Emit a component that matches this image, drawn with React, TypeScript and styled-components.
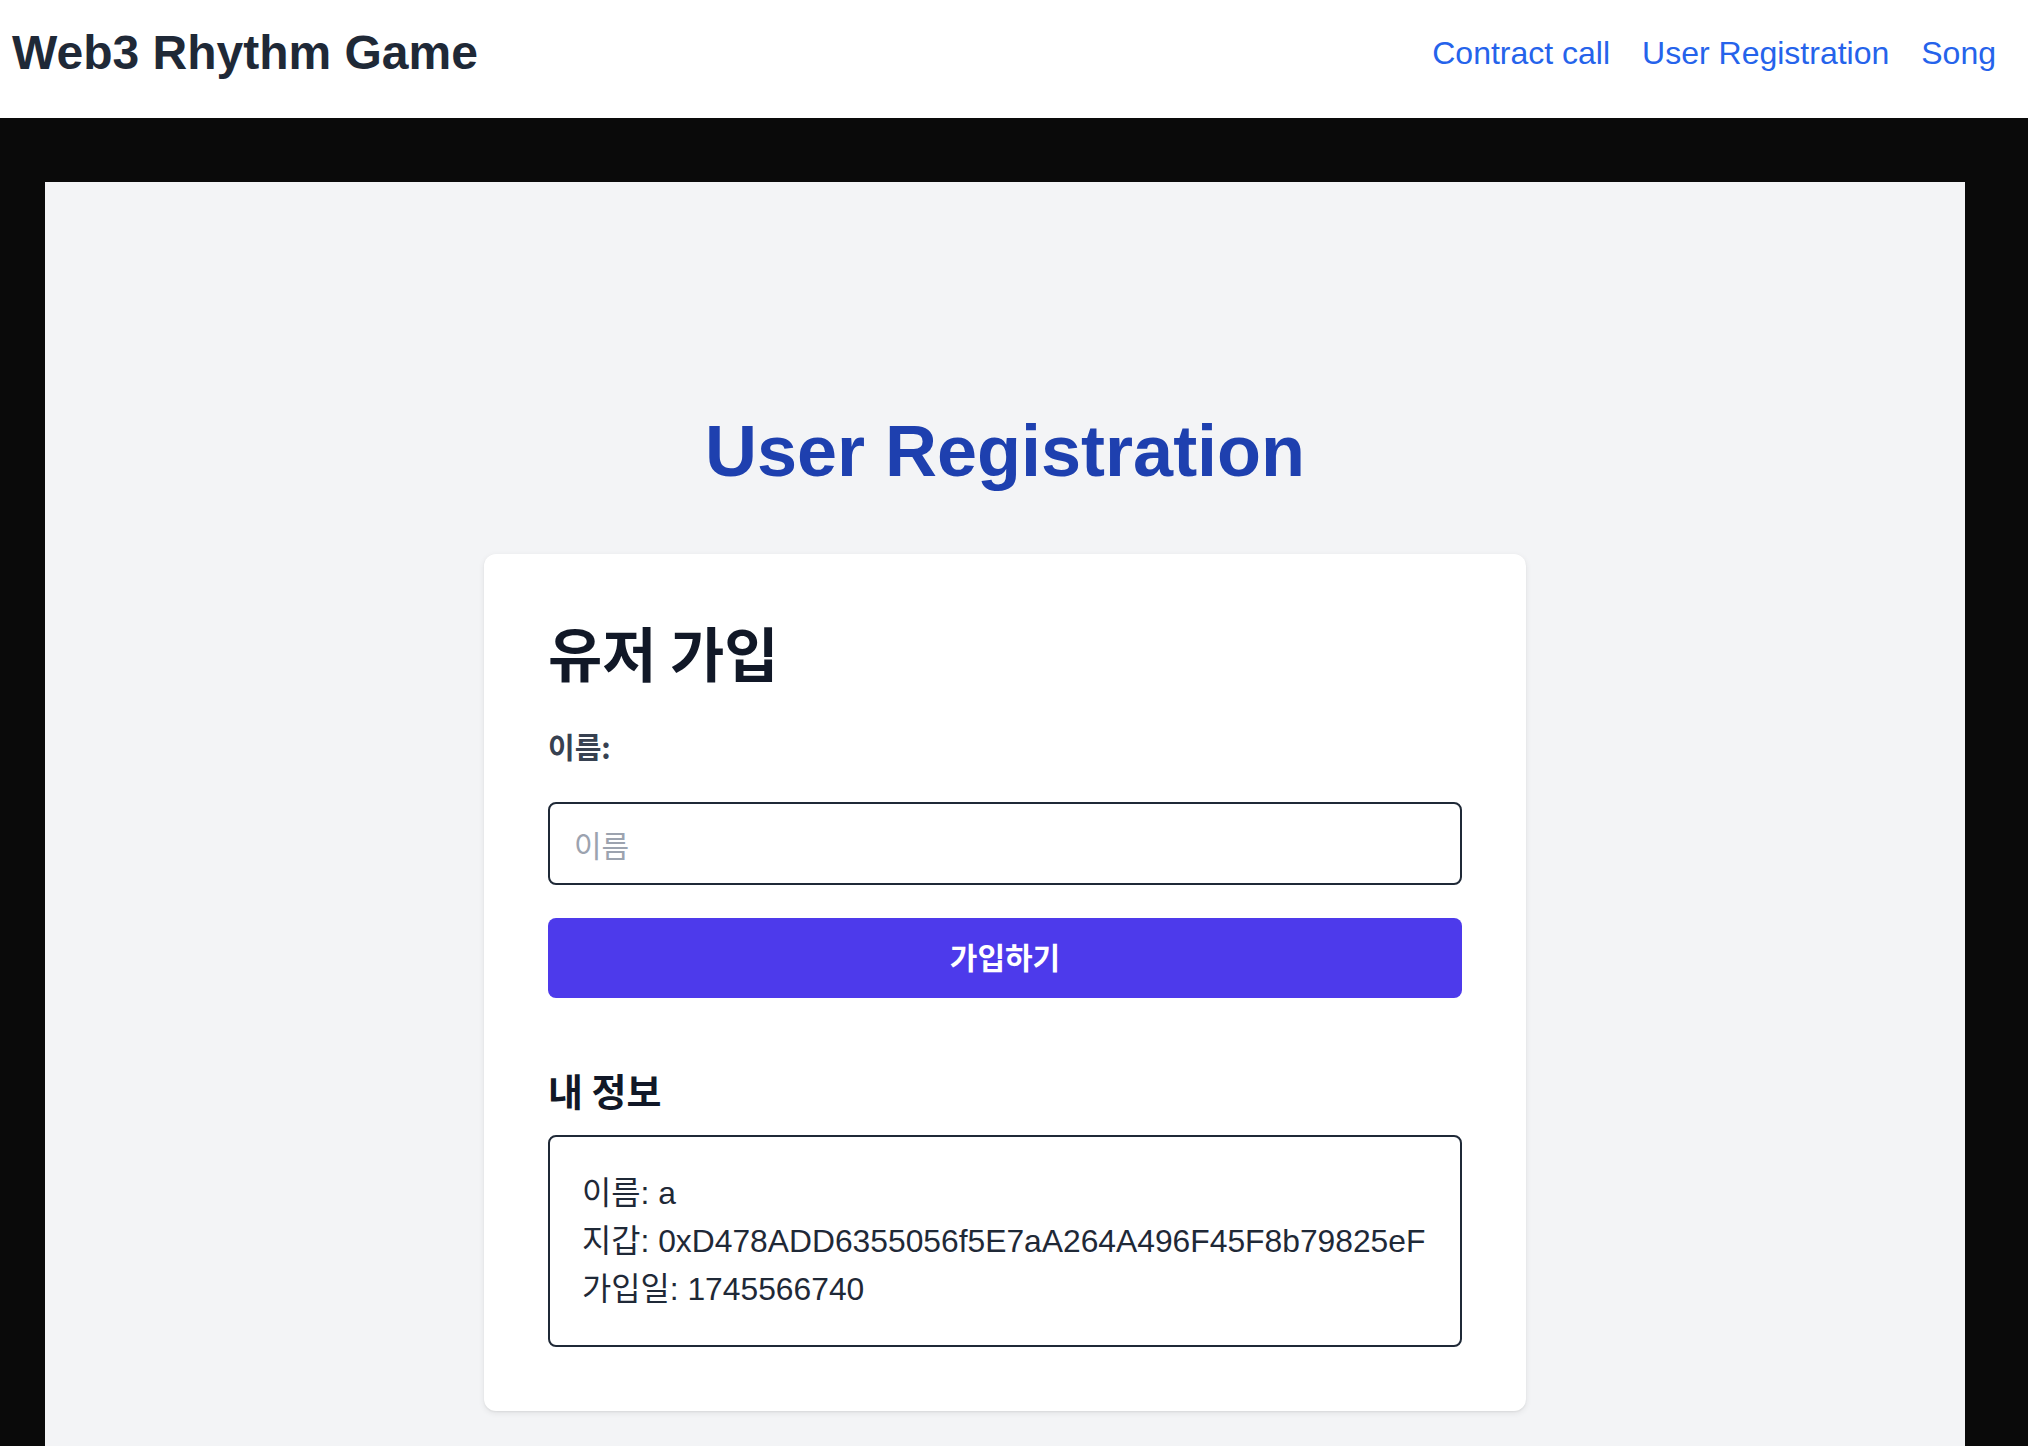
import React from "react";
import styled, { createGlobalStyle } from "styled-components";

const GlobalStyle = createGlobalStyle`
  html, body {
    margin: 0;
    padding: 0;
    background: #0a0a0a;
  }
  body {
    font-family: "Liberation Sans", "Noto Sans CJK KR", Arial, sans-serif;
  }
  * { box-sizing: border-box; }
`;

const Page = styled.div`
  min-height: 1446px;
  background: #0a0a0a;
`;

const Header = styled.header`
  height: 118px;
  background: #ffffff;
  display: flex;
  align-items: center;
  justify-content: space-between;
  padding: 0 32px 12px 12px;
`;

const Brand = styled.h1`
  margin: 0;
  font-size: 48px;
  font-weight: 700;
  color: #1f2937;
  line-height: 56px;
`;

const Nav = styled.nav`
  display: flex;
  align-items: center;
  gap: 32px;
`;

const NavLink = styled.a`
  font-size: 32px;
  color: #2563eb;
  text-decoration: none;
  line-height: 40px;
`;

const Main = styled.main`
  padding: 64px 0 0 45px;
`;

const Panel = styled.section`
  width: 1920px;
  min-height: 1264px;
  background: #f3f4f6;
  padding-top: 229px;
  display: flex;
  flex-direction: column;
  align-items: center;
`;

const PageTitle = styled.h2`
  margin: 0 0 63px;
  font-size: 72px;
  line-height: 80px;
  font-weight: 700;
  color: #1e40af;
`;

const Card = styled.div`
  width: 1042px;
  background: #ffffff;
  border-radius: 12px;
  box-shadow: 0 2px 6px rgba(0, 0, 0, 0.08), 0 1px 2px rgba(0, 0, 0, 0.06);
  padding: 64px;
  display: flex;
  flex-direction: column;
`;

const CardTitle = styled.h3`
  margin: -2px 0 38px;
  font-family: "Noto Sans CJK KR", sans-serif;
  font-size: 59px;
  line-height: 72px;
  font-weight: 700;
  color: #111827;
`;

const Label = styled.label`
  display: block;
  margin-bottom: 36px;
  font-family: "Noto Sans CJK KR", sans-serif;
  font-size: 29px;
  line-height: 40px;
  font-weight: 600;
  color: #374151;
`;

const Input = styled.input`
  width: 100%;
  height: 83px;
  border: 2px solid #1f2937;
  border-radius: 8px;
  padding: 0 24px;
  font-family: "Noto Sans CJK KR", sans-serif;
  font-size: 30px;
  color: #111827;
  background: #ffffff;
  outline: none;
  &::placeholder {
    color: #9ca3af;
  }
`;

const SubmitButton = styled.button`
  margin-top: 33px;
  width: 100%;
  height: 80px;
  border: none;
  border-radius: 8px;
  padding: 0 0 4px;
  background: #4d3aeb;
  color: #ffffff;
  font-family: "Noto Sans CJK KR", sans-serif;
  font-size: 30px;
  font-weight: 600;
  cursor: pointer;
`;

const SectionTitle = styled.h4`
  margin: 64px 0 17px;
  font-family: "Noto Sans CJK KR", sans-serif;
  font-size: 38px;
  line-height: 56px;
  font-weight: 700;
  color: #111827;
`;

const InfoBox = styled.div`
  border: 2px solid #1f2937;
  border-radius: 8px;
  padding: 32px 32px 32px 32px;
  font-size: 31.8px;
  line-height: 48px;
  color: #1f2937;
`;

const InfoLine = styled.p`
  margin: 0;
  white-space: nowrap;
`;

export default function App() {
  return (
    <Page>
      <GlobalStyle />
      <Header>
        <Brand>Web3 Rhythm Game</Brand>
        <Nav>
          <NavLink href="#">Contract call</NavLink>
          <NavLink href="#">User Registration</NavLink>
          <NavLink href="#">Song</NavLink>
        </Nav>
      </Header>
      <Main>
        <Panel>
          <PageTitle>User Registration</PageTitle>
          <Card>
            <CardTitle>유저 가입</CardTitle>
            <Label htmlFor="name">이름:</Label>
            <Input id="name" placeholder="이름" />
            <SubmitButton type="button">가입하기</SubmitButton>
            <SectionTitle>내 정보</SectionTitle>
            <InfoBox>
              <InfoLine>이름: a</InfoLine>
              <InfoLine>지갑: 0xD478ADD6355056f5E7aA264A496F45F8b79825eF</InfoLine>
              <InfoLine>가입일: 1745566740</InfoLine>
            </InfoBox>
          </Card>
        </Panel>
      </Main>
    </Page>
  );
}
